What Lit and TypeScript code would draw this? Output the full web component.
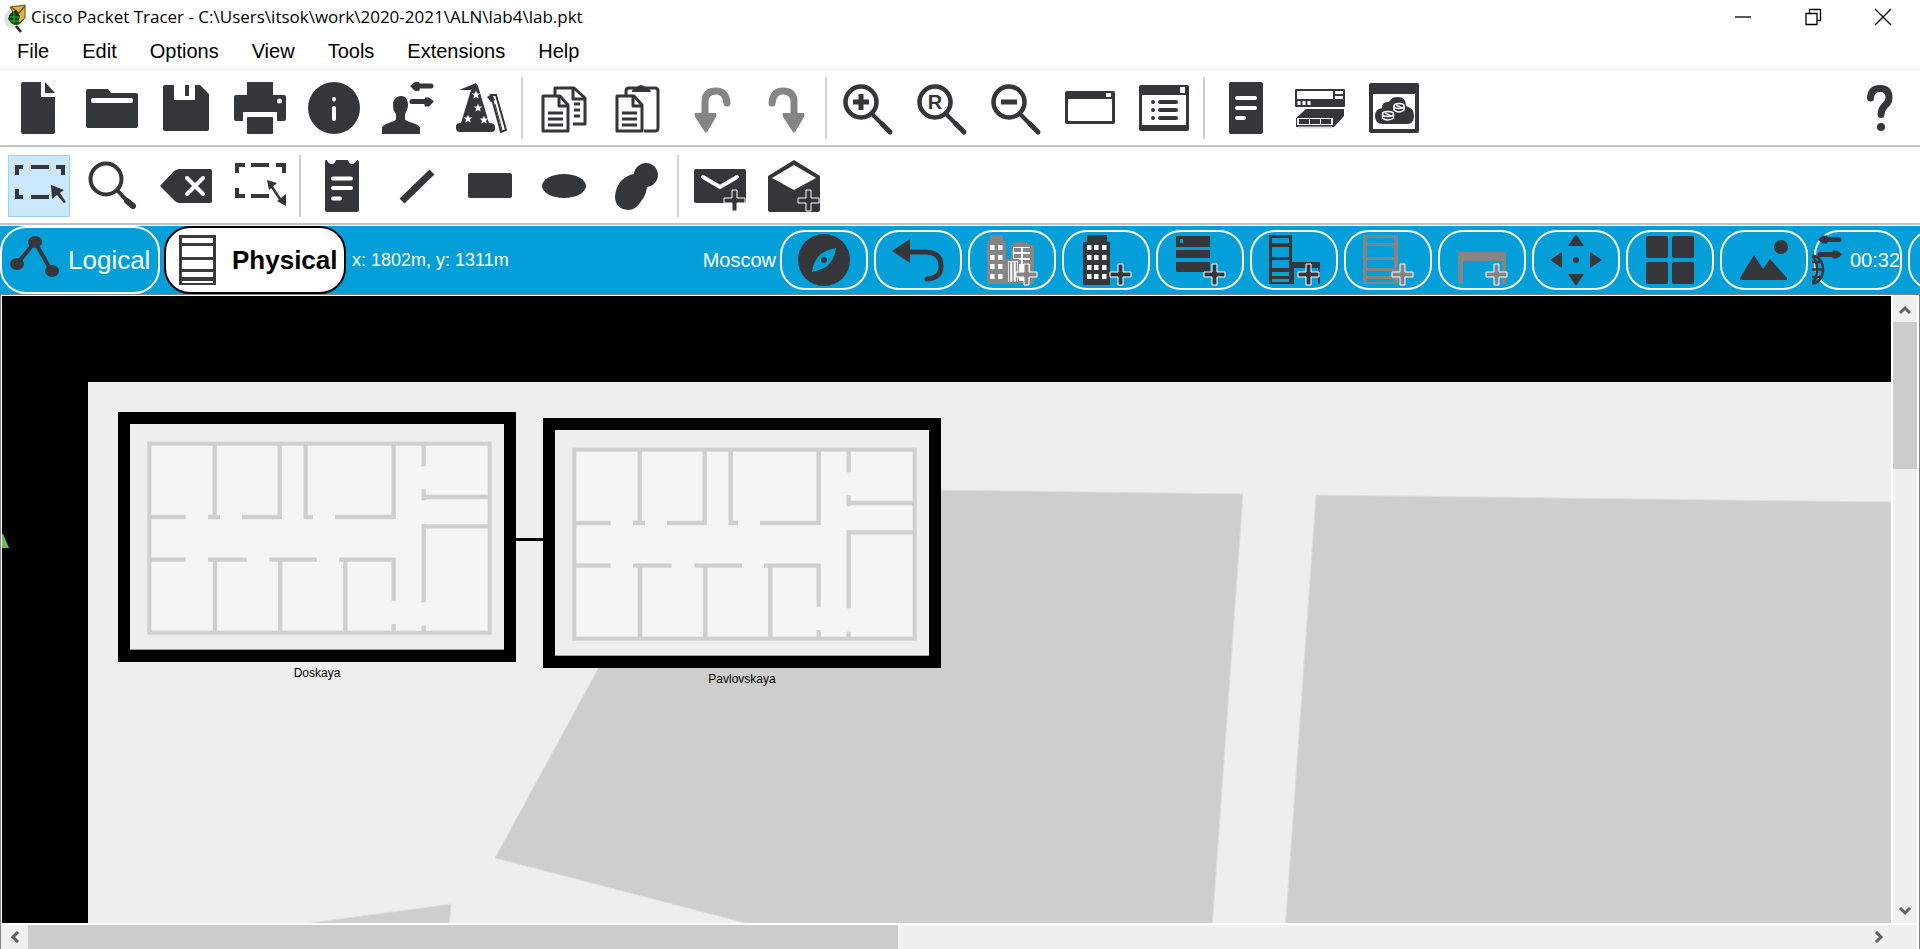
import { LitElement, html, css, svg, nothing } from "lit";
import { customElement, property } from "lit/decorators.js";

const plus = (x: number, y: number) => svg`<path class="plus" d="M${x + 8} ${y}h5v8h8v5h-8v8h-5v-8h-8v-5h8z"/>`;

const sheet = (x: number, y: number) => svg`
  <path class="outline" d="M${x} ${y}h17l8 9v26h-25z"/>
  <path class="outline" d="M${x + 16} ${y}v10h9"/>`;

const lens = (mark: unknown) => svg`
  <ellipse cx="19" cy="20" rx="15.5" ry="15.5" fill="none" stroke="currentColor" stroke-width="4.500"/>
  <path d="M30 32l12 12" stroke="currentColor" stroke-width="4"/>
  <path d="M40 42l8 8" stroke="currentColor" stroke-width="5" stroke-linecap="round"/>${mark}`;

const windows = (cells: [number, number][]) =>
  cells.map(([x, y]) => svg`<rect x=${x} y=${y} width="4.5" height="5" fill="#fff"/>`);

const grid = (xs: number[], ys: number[]) =>
  ys.flatMap((y) => xs.map((x) => [x, y] as [number, number]));

const star = (x: number, y: number) => svg`<path fill="#fff" transform="translate(${x} ${y})"
  d="M0-4.500L1.200-1.500 4.300-1.400 1.900.6 2.700 3.600 0 1.900-2.700 3.600-1.900.6-4.300-1.400-1.200-1.500z"/>`;

const icons: Record<string, unknown> = {
  app: svg`<circle cx="12" cy="15" r="10" fill="#dfe3df"/><circle cx="14" cy="14" r="7" fill="#0b5a14"/>
    <path d="M8 3L23 1v13l-6 5z" fill="#e0b34a" stroke="#6a4a10" stroke-width="1"/>
    <path d="M9 3l8 6 6-7" fill="none" stroke="#6a4a10" stroke-width="1.300"/>
    <path d="M8 10l6-4 4 6-2 7h-6l-4-4z" fill="#0a3d0f"/><path d="M8 13h9M12 8v11M8 17h9" stroke="#20c030" stroke-width="1"/>
    <path d="M14 22l5 6" stroke="#222" stroke-width="2.500"/>`,
  new: svg`<path d="M11 0h18v15h14v35a2 2 0 0 1-2 2H11a2 2 0 0 1-2-2V2a2 2 0 0 1 2-2zM33 0l10 11H33z"/>`,
  open: svg`<path d="M2 7h20l3 4h25a2 2 0 0 1 2 2v31a2 2 0 0 1-2 2H2a2 2 0 0 1-2-2V9a2 2 0 0 1 2-2z"/><rect x="5" y="16" width="42" height="5" rx="2" fill="#fff"/>`,
  save: svg`<path d="M5 3h9v15h21V3h5l9 9v35a2 2 0 0 1-2 2H5a2 2 0 0 1-2-2V5a2 2 0 0 1 2-2z"/><path d="M25 3h4v11h-4z"/>`,
  print: svg`<path d="M13 0h26v12H13zM2 13h48a2 2 0 0 1 2 2v22a2 2 0 0 1-2 2h-7V30H9v9H2a2 2 0 0 1-2-2V15a2 2 0 0 1 2-2z"/><path d="M13 12h26v2H13z"/><rect x="13" y="35" width="26" height="17" rx="1"/><circle cx="45.500" cy="19" r="2.500" fill="#fff"/>`,
  info: svg`<circle cx="26" cy="26" r="26"/><g stroke="#fff" stroke-width="4" stroke-linecap="round"><path d="M26 17v.5M26 26v11"/></g>`,
  user: svg`<path d="M19 14c5 0 7 4 7 9 0 4-2 7-3 9v5c0 3 14 4 15 9v6H0v-6c1-5 14-6 14-9v-5c-2-2-3-5-3-9 0-5 3-9 8-9z"/>
    <g stroke="currentColor" stroke-width="5" stroke-linecap="round"><path d="M35 4h14M30 19.500h14"/></g>
    <path d="M28 4l5-4h4q2 4 0 9h-4zM52 19.500l-5-4h-4q-2 4 0 9h4z"/>`,
  wizard: svg`<path d="M3 8L20 1l2 3 11 37q6 0 6 4v2q0 3-4 3H4q-4 0-4-4v-2q0-3 5-3L15 8z"/><path d="M35 13l5 0 10 35-5 2z" fill="#fff" stroke="currentColor" stroke-width="2"/><path d="M31 15l5-3 3 6-4 2z"/>
    <path d="M39 22l7 26" stroke="currentColor" stroke-width="1"/>
    ${star(20, 13)}${star(22, 26)}${star(12, 37)}${star(28, 38)}`,
  copy: svg`<path class="outline" d="M17 13V6h19l11 10v26H35"/><path class="outline" d="M35 6v11h11M36 22h6M36 28h6M36 34h6"/>
    ${sheet(5, 14)}<path class="outline" d="M10 31h15M10 37h15M10 43h15"/>`,
  paste: svg`<path class="outline" d="M14 13V9q0-3 3-3h26q3 0 3 3v37q0 3-3 3H32"/><path d="M20 10q0-4 5-5 4-4 8 0 5 1 6 5z"/>
    ${sheet(5, 14)}<path class="outline" d="M10 31h15M10 37h15M10 43h15"/>`,
  undo: svg`<path d="M19 36V20q0-11 11-11 10 0 11 12" fill="none" stroke="currentColor" stroke-width="7" stroke-linecap="round"/><path d="M9 31h21q1 2 0 4l-9 15q-1 1-2 0L9 35q-1-2 0-4z"/>`,
  redo: svg`<path d="M34 36V20Q34 9 23 9 13 9 12 21" fill="none" stroke="currentColor" stroke-width="7" stroke-linecap="round"/><path d="M23 31h21q1 2 0 4l-9 15q-1 1-2 0l-10-15q-1-2 0-4z"/>`,
  zoomIn: lens(svg`<path d="M11 20h16M19 12v16" stroke="currentColor" stroke-width="5"/>`),
  zoomReset: lens(svg`<text x="19" y="27" text-anchor="middle" class="letter">R</text>`),
  zoomOut: lens(svg`<path d="M11 20h16" stroke="currentColor" stroke-width="5"/>`),
  palette: svg`<path fill-rule="evenodd" d="M3 9h46q2 0 2 2v29q0 2-2 2H3q-2 0-2-2V11q0-2 2-2zM4 17v22h44V17z"/><rect x="42" y="11" width="5" height="4" fill="#fff"/>`,
  dialog: svg`<path fill-rule="evenodd" d="M3 3h46q2 0 2 2v42q0 2-2 2H3q-2 0-2-2V5q0-2 2-2zM4 13v30h44V13z"/><rect x="42" y="5" width="5" height="6" fill="#fff"/>
    <g stroke="currentColor" stroke-width="4" stroke-linecap="round"><path d="M22 20h16M22 28h16M22 36h16M15 20h.1M15 28h.1M15 36h.1"/></g>`,
  notes: svg`<rect x="9" width="34" height="52" rx="2"/><path d="M17 16h18M17 26h18M17 36h7" stroke="#fff" stroke-width="4" stroke-linecap="round"/>`,
  devices: svg`<rect x="1" y="7" width="50" height="18" rx="1"/><path d="M3 9h36v8H3zM41 9h8v3h-8zM41 14h8v3h-8z" fill="#fff"/>
    <path d="M5 19v4M10 19v4M15 19v4" stroke="#fff" stroke-width="3"/>
    <path d="M12 27h38v7l-10 11H2v-9z"/><path d="M3 36h36v7H3z" fill="#fff"/><path d="M5 37h10v5H5zM16 37h10v5H16zM27 37h10v5H27z"/><path d="M4 45.500h34" stroke="#ddd" stroke-width="2"/>`,
  cloud: svg`<path fill-rule="evenodd" d="M3 1h46q2 0 2 2v46q0 2-2 2H3q-2 0-2-2V3q0-2 2-2zM5 12v35h42V12z"/>
    <path d="M14 42q-7-1-7-8t7-8q0-7 7-6 2-5 9-5 8 0 8 9 8 2 8 10 0 7-6 8z"/>
    <g fill="none" stroke="#fff" stroke-width="1.500"><ellipse cx="31" cy="24" rx="5" ry="2.500"/><path d="M26 24v4q5 4 10 0v-4M28 23l6 3"/><ellipse cx="20" cy="32" rx="5.500" ry="2.500"/><path d="M14.500 32v4q5 4 11 0v-4M17 31l6 3"/></g>`,
  help: svg`<path d="M14.500 16Q15 6.500 24 6.500q9 0 9 9 0 5-4 8-4 4-4 9" fill="none" stroke="currentColor" stroke-width="7" stroke-linecap="round"/><circle cx="25" cy="45" r="4"/>`,
  select: svg`<path d="M5 15V7h6M19 7h18M44 7h7v8M5 29v8h6M19 37h18" fill="none" stroke="currentColor" stroke-width="4"/><path d="M39 25l13 5-4 3 6 9-2 1-7-8-5 4z"/>`,
  inspect: svg`<circle cx="20" cy="19" r="15.500" fill="none" stroke="currentColor" stroke-width="4"/><path d="M31 30l12 13" stroke="currentColor" stroke-width="4"/><path d="M41 41l6 5" stroke="currentColor" stroke-width="6" stroke-linecap="round"/>`,
  remove: svg`<path d="M0 26L14 11q3-2 6-2h30q2 0 2 2v30q0 2-2 2H20q-4 0-7-4z"/><path d="M27 18l16 16M43 18L27 34" stroke="#fff" stroke-width="4" stroke-linecap="round"/>`,
  resize: svg`<path d="M3 13V5h8M17 5h18M42 5h8v8M3 28v8h8M17 36h18" fill="none" stroke="currentColor" stroke-width="4"/><path d="M36 24l12 18" stroke="currentColor" stroke-width="2.500"/><path d="M33 20l10 3-8 7zM52 46v-12l-9 7z"/>`,
  note: svg`<path d="M9 2q0-2 1-2h1q1 4 5 4 3 0 4-4h12q1 4 4 4t5-4q2 0 2 2v48q0 2-2 2H11q-2 0-2-2z"/><path d="M17 18.500h18M17 28h18M17 38.500h7" stroke="#fff" stroke-width="4" stroke-linecap="round"/>`,
  line: svg`<path d="M12 41L42 12" stroke="currentColor" stroke-width="7"/>`,
  rect: svg`<rect x="4" y="13" width="44" height="25" rx="2"/>`,
  ellipse: svg`<ellipse cx="26" cy="26" rx="22" ry="12"/>`,
  freeform: svg`<path d="M22 14a12 12 0 1 1 13 13q-1 8-5 13-6 10-14 10-13-1-13-14 1-9 6-15 6-6 13-7z"/>`,
  pdu: svg`<rect y="9" width="52" height="34" rx="2"/><path d="M9 17l17 10 17-10" fill="none" stroke="#fff" stroke-width="4" stroke-linecap="round"/>${plus(30, 30)}`,
  complexPdu: svg`<path d="M0 16L26 0l26 16v34q0 2-2 2H2q-2 0-2-2z"/><path d="M4 18L26 5l22 13-22 12z" fill="#fff"/>${plus(30, 30)}`,
  logical: svg`<path d="M7 28L25 6l17 30" fill="none" stroke="currentColor" stroke-width="4"/><ellipse cx="25" cy="6" rx="7" ry="6"/><ellipse cx="7" cy="28" rx="7" ry="6"/><ellipse cx="42" cy="35" rx="7" ry="6"/>`,
  rack: svg`<path fill-rule="evenodd" d="M0 0h37v50H0zM3 3v5h31V3zM3 11v11h31V11zM3 25v9h31v-9zM3 37v5h31v-5zM3 46v2h31v-2z"/>`,
  compass: svg`<path fill-rule="evenodd" d="M26 0a26 26 0 1 1 0 52 26 26 0 0 1 0-52zM38 14q-14 3-18 9-5 6-6 15 14-3 18-9 5-6 6-15zM26 23a3 3 0 1 1 0 6 3 3 0 0 1 0-6z"/>`,
  back: svg`<path d="M13 18h20q16 0 16 14 0 12-14 13" fill="none" stroke="currentColor" stroke-width="5" stroke-linecap="round"/><path d="M0 17L18 5v24z"/>`,
  city: svg`<path d="M4 1h13v6h3v43H1V7h3zM25 11q10-7 20 0h3v39H20V25h5z"/>${windows(grid([4, 12], [11, 21, 30, 40]))}
    <path d="M27 13h17v34H27z" fill="#fff"/><path d="M28 14h7v4h-7zM37 14h7v4h-7zM28 20h7v4h-7zM37 20h7v4h-7zM28 26h7v4h-7zM37 26h7v4h-7z"/><path d="M19 25h14v25H19z"/><path d="M22 27h10v21H22z" fill="#fff"/><path d="M23.500 28v20M27 28v20M30.500 28v20" stroke="currentColor" stroke-width="1.500"/>${plus(30, 30)}`,
  building: svg`<path d="M7 1h20v7h3v43H3V8h4z"/>${windows(grid([7, 14, 22], [11, 21, 31, 40]))}${plus(30, 30)}`,
  closet: svg`<path fill-rule="evenodd" d="M3 2h32q1 0 1 1v10H2V3q0-1 1-1zM6 5v4h3V5zM2 16h34v8H2zM2 28h34v10H3q-1 0-1-1z"/>${plus(30, 30)}`,
  rackTable: svg`<path fill-rule="evenodd" d="M1 1h23v27h28v22h-2V34H26v16H1zM4 4v5h17V4zM4 13v10h17V13zM4 26v8h17v-8zM4 38v4h17v-4zM4 45v3h17v-3z"/>${plus(30, 30)}`,
  rackAdd: svg`<path fill-rule="evenodd" d="M1 1h35v49H1zM5 4v5h27V4zM5 12v11h27V12zM5 26v8h27v-8zM5 37v5h27v-5zM5 45v3h27v-3z"/>${plus(30, 30)}`,
  table: svg`<path d="M2 18h48v32h-4V27H7v23H2z"/>${plus(30, 30)}`,
  move: svg`<path d="M26 0l8 12H18zM26 52l8-12H18zM0 26l12-8v16zM52 26l-12-8v16z"/><circle cx="26" cy="26" r="3"/>`,
  tiles: svg`<rect x="2" y="2" width="22" height="22" rx="2"/><rect x="28" y="2" width="22" height="22" rx="2"/><rect x="2" y="28" width="22" height="22" rx="2"/><rect x="28" y="28" width="22" height="22" rx="2"/>`,
  scenery: svg`<circle cx="43" cy="13" r="7"/><path d="M2 46v-2l14-23 9 14 7-10 17 19v2z"/>`,
  globe: svg`<g stroke="currentColor" stroke-width="5" stroke-linecap="round"><path d="M10 5.500h17M8 20.500h18"/></g><path d="M6 5.500l5-4h4q2 4 0 8h-4zM30 20.500l-5-4h-4q-2 4 0 8h4z"/>
    <path d="M0 21.500A11 14 0 0 1 0 49.500M0 23A5 12.500 0 0 1 0 48M0 35.500h11M0 28h8M0 43h8" fill="none" stroke="currentColor" stroke-width="2.500"/>`,
  minimize: svg`<path d="M0 8h16" stroke="currentColor" stroke-width="1.300"/>`,
  restore: svg`<path d="M1 4.500h11v11H1zM4.500 4V.5h11v11H12" fill="none" stroke="currentColor" stroke-width="1.300"/>`,
  close: svg`<path d="M0 0l16 16M16 0L0 16" stroke="currentColor" stroke-width="1.300"/>`,
};

const icon = (name: string, w = 52, h = 52) =>
  html`<svg class="icon" width=${w} height=${h} viewBox="0 0 ${w} ${h}" aria-hidden="true">${icons[name]}</svg>`;

const iconStyles = css`
  .icon { display: block; flex: none; fill: currentColor; overflow: visible; }
  .outline { fill: none; stroke: currentColor; stroke-width: 3; stroke-linejoin: round; }
  .plus { stroke: #fff; stroke-width: 1; fill: currentColor; }
  .letter { font: bold 20px "Liberation Sans", Arial, sans-serif; }
  button { font: inherit; color: inherit; margin: 0; padding: 0; border: 0; background: none; }
`;

interface Tool { id: string; label: string; disabled?: boolean; active?: boolean }

@customElement("pt-toolbar")
class PtToolbar extends LitElement {
  @property({ attribute: false }) groups: Tool[][] = [];
  @property({ attribute: false }) trailing?: Tool;

  static styles = [iconStyles, css`
    :host { display: flex; align-items: center; height: 75px; padding: 0 1px; background: #fff; border-bottom: 2px solid #c3c3c3; color: #353639; }
    .sep { width: 2px; height: 62px; margin: 0 4px 0 2px; background: #d0d0d0; }
    .tool { display: flex; width: 74px; height: 62px; align-items: center; justify-content: center; }
    .tool:disabled { color: #858585; }
    .active { width: 62px; margin: 0 5px 0 7px; padding-right: 2px; box-sizing: border-box; background: #cce8ff; box-shadow: inset 0 0 0 1px #99d1ff; }
    .push { margin-left: auto; }
  `];

  private tool(t: Tool, extra = "") {
    return html`<button class="tool ${t.active ? "active" : ""} ${extra}" ?disabled=${t.disabled} aria-label=${t.label}
      aria-pressed=${t.active ? "true" : nothing}>${icon(t.id)}</button>`;
  }

  render() {
    return html`${this.groups.map((g, i) => html`${i ? html`<span class="sep"></span>` : nothing}${g.map((t) => this.tool(t))}`)}
      ${this.trailing ? this.tool(this.trailing, "push") : nothing}`;
  }
}

@customElement("pt-location-bar")
class PtLocationBar extends LitElement {
  static styles = [iconStyles, css`
    :host { display: flex; align-items: center; height: 68px; overflow: hidden; background: #049fd9; border-top: 1px solid #fff; color: #fff; }
    .tab { flex: none; display: flex; align-items: center; height: 68px; border: 2px solid #fff; border-radius: 26px; box-sizing: border-box; font-size: 26px; line-height: 30px; }
    .logical { width: 160px; padding-left: 8px; gap: 8px; }
    .logical .icon { margin-bottom: 6px; }
    .logical svg, .action svg { color: #353639; }
    .physical { width: 182px; margin-left: 4px; padding-left: 13px; gap: 16px; border-color: #000; background: #fff; color: #000; font-weight: bold; }
    .physical svg { color: #3a3a3c; }
    .coords { flex: 1; margin-left: 6px; font-size: 18px; white-space: nowrap; }
    .place { font-size: 20px; margin-right: 4px; }
    .actions { flex: none; display: flex; gap: 6px; width: 1140px; }
    .action { flex: none; display: flex; align-items: center; justify-content: center; width: 88px; height: 60px; border: 2px solid #fff; border-radius: 25px; box-sizing: border-box; }
    .action:disabled svg { color: #858585; }
    .clock { justify-content: flex-start; font-size: 20px; }
    .clock svg { margin: 0 4px 0 -4px; }
    .time { width: 49px; overflow: hidden; text-align: left; }
  `];

  private actions: Tool[] = [
    { id: "compass", label: "Navigation" }, { id: "back", label: "Back" },
    { id: "city", label: "New city", disabled: true }, { id: "building", label: "New building" },
    { id: "closet", label: "New closet" }, { id: "rackTable", label: "New container" },
    { id: "rackAdd", label: "New rack", disabled: true }, { id: "table", label: "New table", disabled: true },
    { id: "move", label: "Move object" }, { id: "tiles", label: "Grid" }, { id: "scenery", label: "Background" },
  ];

  render() {
    return html`
      <button class="tab logical">${icon("logical", 50, 42)}<span>Logical</span></button>
      <button class="tab physical" aria-pressed="true">${icon("rack", 37, 50)}<span>Physical</span></button>
      <span class="coords">x: 1802m, y: 1311m</span>
      <span class="place">Moscow</span>
      <div class="actions">
        ${this.actions.map((a) => html`<button class="action" aria-label=${a.label} ?disabled=${a.disabled}>${icon(a.id)}</button>`)}
        <button class="action clock" aria-label="Environment 00:32">${icon("globe", 34, 52)}<span class="time">00:32</span></button>
        <button class="action" aria-label="More"></button>
      </div>`;
  }
}

@customElement("pt-building")
class PtBuilding extends LitElement {
  @property() name = "";

  static styles = css`
    :host { display: flex; flex-direction: column; width: 398px; }
    .plan { display: block; width: 398px; height: 250px; }
    .wall { fill: none; stroke: #cfcfcf; stroke-width: 13; }
    .name { text-align: center; font-size: 12px; line-height: 14px; margin-top: 4px; color: #000; }
  `;

  render() {
    return html`
      <svg class="plan" viewBox="0 0 1194 750" aria-hidden="true">
        <rect width="1194" height="750" fill="#000"/>
        <rect x="36" y="36" width="1122" height="677" fill="#eee"/>
        <g transform="translate(-114 -126)">
          <rect x="208" y="221" width="1021" height="567" fill="#f5f5f5" stroke="#cfcfcf" stroke-width="12"/>
          <path class="wall" d="M404 221V441M599 221V447M677 221V447M941 221V447M1031 221V289M1031 358V391M1031 462V697M1031 767V788M941 563V692M941 762V788M405 569V788M601 569V788M796 569V788
            M208 441H317M384 441H420M486 441H599M677 441H699M765 441H941M208 569H317M384 569H500M568 569H711M777 569H941M1031 381H1230M1031 469H1230"/>
        </g>
      </svg>
      <span class="name">${this.name}</span>`;
  }
}

@customElement("pt-scrollbar")
class PtScrollbar extends LitElement {
  @property({ type: Boolean, reflect: true }) vertical = false;
  @property({ type: Number }) size = 0;

  static styles = [iconStyles, css`
    :host { display: flex; background: #f0f0f0; height: 24px; color: #606060; }
    :host([vertical]) { flex-direction: column; width: 24px; height: auto; }
    .arrow { flex: none; display: flex; align-items: center; justify-content: center; width: 27px; height: 24px; }
    :host([vertical]) .arrow { width: 24px; height: 27px; }
    :host([vertical]) .arrow:last-child { height: 24px; }
    .track { flex: 1; display: flex; min-width: 0; min-height: 0; }
    :host([vertical]) .track { flex-direction: column; }
    .thumb { background: #cbcbcb; }
    .chevron { fill: none; stroke: currentColor; stroke-width: 3; }
  `];

  render() {
    const [a, b] = this.vertical ? ["M1 10l5-5 5 5", "M1 3l5 5 5-5"] : ["M9 1L4 6l5 5", "M4 1l5 5-5 5"];
    const arrow = (d: string) => html`<svg width="12" height="12" viewBox="0 0 12 12" aria-hidden="true"><path class="chevron" d=${d}/></svg>`;
    return html`
      <button class="arrow" aria-label="Scroll back">${arrow(a)}</button>
      <div class="track"><div class="thumb" style="flex-basis:${this.size}%"></div></div>
      <button class="arrow" aria-label="Scroll forward">${arrow(b)}</button>`;
  }
}

@customElement("app-root")
class AppRoot extends LitElement {
  static styles = [iconStyles, css`
    :host { display: flex; flex-direction: column; height: 100vh; background: #fff; color: #000; font-family: "Liberation Sans", Arial, sans-serif; overflow: hidden; }
    .title { display: flex; align-items: center; height: 34px; font: 17px/34px "Open Sans", "Noto Sans", sans-serif; }
    .title .icon { margin: 2px 3px 0 2px; }
    .caption { flex: 1; }
    .window { display: flex; width: 70px; height: 34px; align-items: center; justify-content: center; }
    .window .icon { margin: 0; }
    .controls { display: flex; margin-right: 2px; }
    .menu { display: flex; gap: 33px; height: 35px; padding-left: 17px; font-size: 20px; line-height: 32px; border-bottom: 1px solid #efefef; }
    .menu button { height: 33px; }
    .second { height: 74px; padding-top: 2px; }
    .workspace { flex: 1; display: grid; grid-template: minmax(0, 1fr) 24px / minmax(0, 1fr) 24px; gap: 2px; padding-right: 2px; border: solid #83838b; border-width: 1px 1px 0 1px; }
    .canvas { position: relative; overflow: hidden; background: #000; margin: 1px 0 0 1px; }
    .map { position: absolute; left: 0; top: 0; }
    .home { position: absolute; left: 116px; top: 116px; }
    .branch { position: absolute; left: 541px; top: 122px; }
    .across { grid-column: 1 / 3; padding-right: 26px; }
  `];

  private main: Tool[][] = [
    [{ id: "new", label: "New" }, { id: "open", label: "Open" }, { id: "save", label: "Save" }, { id: "print", label: "Print" },
      { id: "info", label: "Network information" }, { id: "user", label: "User profile" }, { id: "wizard", label: "Activity wizard" }],
    [{ id: "copy", label: "Copy" }, { id: "paste", label: "Paste" }, { id: "undo", label: "Undo", disabled: true }, { id: "redo", label: "Redo", disabled: true }],
    [{ id: "zoomIn", label: "Zoom in" }, { id: "zoomReset", label: "Zoom reset" }, { id: "zoomOut", label: "Zoom out" },
      { id: "palette", label: "Drawing palette" }, { id: "dialog", label: "Custom devices dialog" }],
    [{ id: "notes", label: "Command log" }, { id: "devices", label: "Device templates" }, { id: "cloud", label: "Cluster" }],
  ];

  private drawing: Tool[][] = [
    [{ id: "select", label: "Select", active: true }, { id: "inspect", label: "Inspect" }, { id: "remove", label: "Delete" }, { id: "resize", label: "Resize" }],
    [{ id: "note", label: "Place note" }, { id: "line", label: "Draw line" }, { id: "rect", label: "Draw rectangle" },
      { id: "ellipse", label: "Draw ellipse" }, { id: "freeform", label: "Draw freeform" }],
    [{ id: "pdu", label: "Add simple PDU" }, { id: "complexPdu", label: "Add complex PDU" }],
  ];

  render() {
    return html`
      <header class="title">
        ${icon("app", 26, 28)}<span class="caption">Cisco Packet Tracer - C:\\Users\\itsok\\work\\2020-2021\\ALN\\lab4\\lab.pkt</span>
        <div class="controls">
          ${["minimize", "restore", "close"].map((n) => html`<button class="window" aria-label=${n}>${icon(n, 16, 16)}</button>`)}
        </div>
      </header>
      <nav class="menu">
        ${["File", "Edit", "Options", "View", "Tools", "Extensions", "Help"].map((m) => html`<button>${m}</button>`)}
      </nav>
      <pt-toolbar .groups=${this.main} .trailing=${{ id: "help", label: "Help" }}></pt-toolbar>
      <pt-toolbar class="second" .groups=${this.drawing}></pt-toolbar>
      <pt-location-bar></pt-location-bar>
      <main class="workspace">
        <div class="canvas">
          <svg class="map" width="4000" height="2000" viewBox="2 296 4000 2000" aria-hidden="true">
            <path d="M88 382H4002V2296H88z" fill="#eee"/>
            <g fill="#cecece" stroke="#dedede" stroke-width="1">
              <path d="M697 487L1243 494 1204 1042 495 858z"/>
              <path d="M1316 495L4002 528V2296H1188z"/>
              <path d="M310 923L451 904 448 940H230z"/>
            </g>
            <path d="M516 539.500h27" stroke="#000" stroke-width="3"/>
            <path d="M2 534l1 0 6 14H2z" fill="#6cc04a"/>
          </svg>
          <pt-building class="home" name="Doskaya"></pt-building>
          <pt-building class="branch" name="Pavlovskaya"></pt-building>
        </div>
        <pt-scrollbar vertical size="25.400"></pt-scrollbar>
        <pt-scrollbar class="across" size="47.400"></pt-scrollbar>
      </main>`;
  }
}
